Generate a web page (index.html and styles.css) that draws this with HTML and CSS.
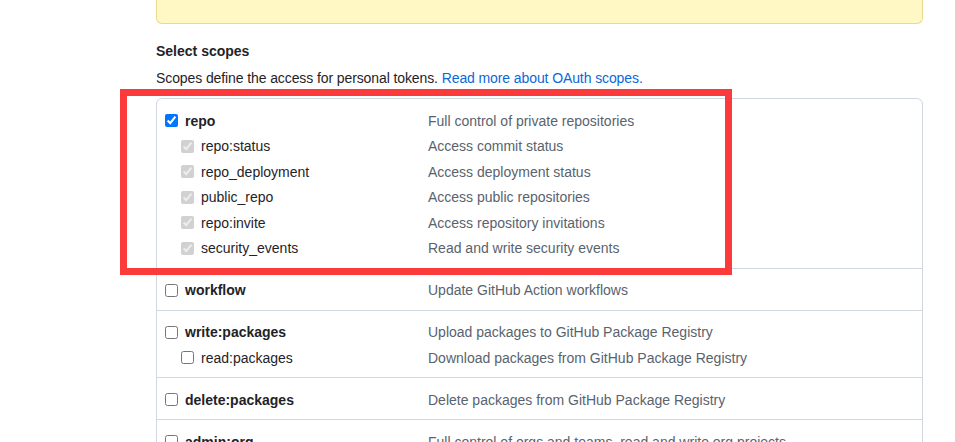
FILE: index.html
```html
<!DOCTYPE html>
<html lang="en">
<head>
<meta charset="utf-8">
<title>Select scopes</title>
<link rel="stylesheet" href="styles.css">
</head>
<body>
<div class="page">
  <div class="flash"></div>
  <h3 class="heading">Select scopes</h3>
  <p class="note">Scopes define the access for personal tokens. <a class="link" href="#">Read more about OAuth scopes.</a></p>

  <div class="scopes">
    <div class="group">
      <div class="row">
        <label class="name top"><input type="checkbox" checked><span>repo</span></label>
        <span class="desc">Full control of private repositories</span>
      </div>
      <div class="row sub">
        <label class="name"><input type="checkbox" checked disabled><span>repo:status</span></label>
        <span class="desc">Access commit status</span>
      </div>
      <div class="row sub">
        <label class="name"><input type="checkbox" checked disabled><span>repo_deployment</span></label>
        <span class="desc">Access deployment status</span>
      </div>
      <div class="row sub">
        <label class="name"><input type="checkbox" checked disabled><span>public_repo</span></label>
        <span class="desc">Access public repositories</span>
      </div>
      <div class="row sub">
        <label class="name"><input type="checkbox" checked disabled><span>repo:invite</span></label>
        <span class="desc">Access repository invitations</span>
      </div>
      <div class="row sub">
        <label class="name"><input type="checkbox" checked disabled><span>security_events</span></label>
        <span class="desc">Read and write security events</span>
      </div>
    </div>

    <div class="group">
      <div class="row">
        <label class="name top"><input type="checkbox"><span>workflow</span></label>
        <span class="desc">Update GitHub Action workflows</span>
      </div>
    </div>

    <div class="group">
      <div class="row">
        <label class="name top"><input type="checkbox"><span>write:packages</span></label>
        <span class="desc">Upload packages to GitHub Package Registry</span>
      </div>
      <div class="row sub">
        <label class="name"><input type="checkbox"><span>read:packages</span></label>
        <span class="desc">Download packages from GitHub Package Registry</span>
      </div>
    </div>

    <div class="group">
      <div class="row">
        <label class="name top"><input type="checkbox"><span>delete:packages</span></label>
        <span class="desc">Delete packages from GitHub Package Registry</span>
      </div>
    </div>

    <div class="group">
      <div class="row">
        <label class="name top"><input type="checkbox"><span>admin:org</span></label>
        <span class="desc">Full control of orgs and teams, read and write org projects</span>
      </div>
    </div>
  </div>
</div>
<div class="highlight"></div>
</body>
</html>
```

FILE: styles.css
```css
html, body {
  margin: 0;
  padding: 0;
  background: #ffffff;
}

body {
  font-family: "Liberation Sans", Arial, sans-serif;
  font-size: 14px;
  color: #1f2328;
  overflow: hidden;
  height: 442px;
}

.page {
  width: 767px;
  margin-left: 156px;
}

.flash {
  height: 23px;
  background: #fff8c5;
  border: 1px solid #ecd78e;
  border-top: 0;
  border-radius: 0 0 6px 6px;
}

.heading {
  margin: 17px 0 0;
  font-size: 14px;
  line-height: 20px;
  font-weight: 700;
  color: #1f2328;
}

.note {
  margin: 7px 0 0;
  line-height: 20px;
  color: #1f2328;
  letter-spacing: -0.1px;
}

.link {
  color: #0969da;
  text-decoration: none;
}

.scopes {
  margin-top: 10px;
  border: 1px solid #d0d7de;
  border-radius: 6px;
}

.group {
  padding: 11px 0 9px 8px;
}

.group + .group {
  border-top: 1px solid #d0d7de;
}

.row {
  display: grid;
  grid-template-columns: 263px 1fr;
  align-items: center;
  height: 21px;
}

.row.sub {
  margin-top: 4.5px;
}

.name {
  display: flex;
  align-items: center;
  gap: 7px;
  color: #1f2328;
}

.name.top {
  font-weight: 700;
}

.row.sub .name {
  padding-left: 16px;
}

.name input {
  margin: 0;
  width: 13px;
  height: 13px;
}

.desc {
  color: #59636e;
}

.highlight {
  position: absolute;
  left: 120px;
  top: 89px;
  width: 612px;
  height: 186px;
  box-sizing: border-box;
  border: 7px solid #fb3b3b;
  pointer-events: none;
}
```
